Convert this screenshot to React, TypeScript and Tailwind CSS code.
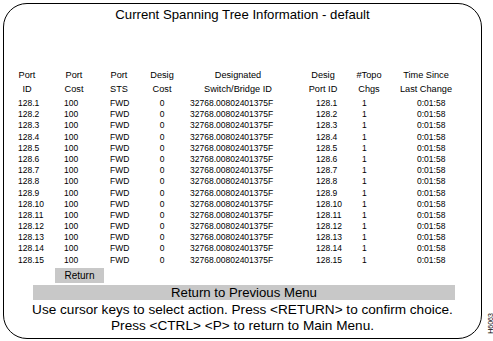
import React from "react";

const headers: [string, string][] = [
  ["Port", "ID"],
  ["Port", "Cost"],
  ["Port", "STS"],
  ["Desig", "Cost"],
  ["Designated", "Switch/Bridge ID"],
  ["Desig", "Port ID"],
  ["#Topo", "Chgs"],
  ["Time Since", "Last Change"],
];

const colClass = [
  "w-[30px]",
  "ml-[17px] w-[30px]",
  "ml-[15px] w-[30px]",
  "ml-[13px] w-[30px]",
  "ml-[13px] w-[96px]",
  "ml-[22px] w-[30px]",
  "ml-[16px] w-[30px]",
  "ml-[19px] w-[46px]",
];

const dataClass = [
  "pl-[6px]",
  "pl-[5px]",
  "pl-[6px]",
  "text-center",
  "pl-0",
  "pl-[8px]",
  "pl-[8px]",
  "pl-[14px]",
];

const rows = Array.from({ length: 15 }, (_, i) => [
  `128.${i + 1}`,
  "100",
  "FWD",
  "0",
  "32768.00802401375F",
  `128.${i + 1}`,
  "1",
  "0:01:58",
]);

export default function App() {
  return (
    <div className="relative w-[493px] h-[341px] bg-white text-black font-['Liberation_Sans',Arial,sans-serif] overflow-hidden">
      <div className="ml-[3px] mt-[3px] w-[479px] h-[336px] border border-black rounded-[24px] flex flex-col">
        <div className="mt-[3px] text-center text-[13.2px] leading-[15px] whitespace-nowrap">
          Current Spanning Tree Information - default
        </div>
        <div className="mt-[46px] pl-[8px]">
          <div className="flex text-[9.2px] leading-[14px]">
            {headers.map((h, i) => (
              <div key={i} className={`${colClass[i]} flex flex-col items-center whitespace-nowrap`}>
                <span>{h[0]}</span>
                <span>{h[1]}</span>
              </div>
            ))}
          </div>
          <div className="mt-[2px]">
            {rows.map((r, ri) => (
              <div key={ri} className="flex text-[8.5px] leading-[11.2px] h-[11.2px]">
                {r.map((c, ci) => (
                  <div key={ci} className={`${colClass[ci]} ${dataClass[ci]} whitespace-nowrap`}>
                    {c}
                  </div>
                ))}
              </div>
            ))}
          </div>
        </div>
        <div className="mt-[2px] ml-[51px] w-[49px] h-[15px] bg-[#c8c8c8] flex items-center justify-center text-[10px] leading-[15px]">
          Return
        </div>
        <div className="mt-[2px] ml-[29px] w-[422px] h-[15px] bg-[#c8c8c8] flex items-center justify-center text-[13.2px] leading-[15px] whitespace-nowrap">
          Return to Previous Menu
        </div>
        <div className="mt-[2px] text-center text-[13.6px] leading-[16px] whitespace-nowrap">
          Use cursor keys to select action. Press &lt;RETURN&gt; to confirm choice.
        </div>
        <div className="text-center text-[13.6px] leading-[16px] whitespace-nowrap">
          Press &lt;CTRL&gt; &lt;P&gt; to return to Main Menu.
        </div>
      </div>
      <div className="absolute left-[481px] top-[314px] w-[18px] h-[18px] flex items-center justify-center">
        <span className="-rotate-90 text-[7px] leading-[7px] whitespace-nowrap">H6063</span>
      </div>
    </div>
  );
}
